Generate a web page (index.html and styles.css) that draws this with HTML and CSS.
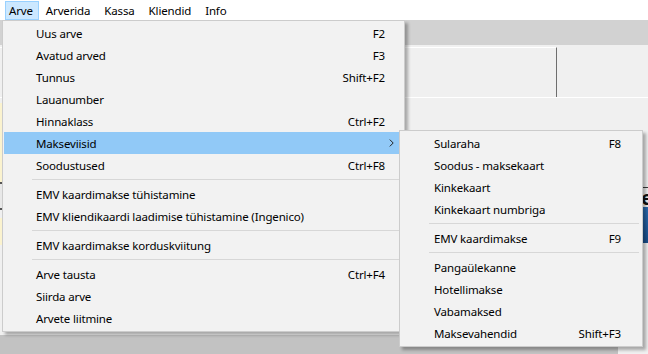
FILE: index.html
```html
<!DOCTYPE html>
<html lang="et">
<head>
    <meta charset="UTF-8">
    <title>Kassa</title>
    <link rel="stylesheet" href="styles.css">
</head>
<body>

<div class="app">
    <div class="menubar">
        <span class="menubar-item active">Arve</span>
        <span class="menubar-item">Arverida</span>
        <span class="menubar-item">Kassa</span>
        <span class="menubar-item">Kliendid</span>
        <span class="menubar-item">Info</span>
    </div>

    <div class="workspace">
        <div class="toolbar"></div>
        <div class="panel-row">
            <div class="panel-box"></div>
        </div>
        <div class="content">
            <div class="edge"></div>
            <div class="content-main">
                <div class="total-card">
                    <div class="total-label">Tasumisele</div>
                    <div class="total-bar"></div>
                </div>
            </div>
        </div>
        <div class="statusbar">
            <div class="status-left"></div>
            <div class="status-right"></div>
        </div>
    </div>

    <div class="menu main-menu">
        <div class="menu-item"><span class="label">Uus arve</span><span class="key">F2</span></div>
        <div class="menu-item"><span class="label">Avatud arved</span><span class="key">F3</span></div>
        <div class="menu-item"><span class="label">Tunnus</span><span class="key">Shift+F2</span></div>
        <div class="menu-item"><span class="label">Lauanumber</span></div>
        <div class="menu-item"><span class="label">Hinnaklass</span><span class="key">Ctrl+F2</span></div>
        <div class="menu-item selected">
            <span class="label">Makseviisid</span>
            <svg class="arrow" width="5" height="8" viewBox="0 0 5 8"><path d="M0.8 0.6 L4.2 4 L0.8 7.4" fill="none" stroke="#222" stroke-width="1"/></svg>
        </div>
        <div class="menu-item"><span class="label">Soodustused</span><span class="key">Ctrl+F8</span></div>
        <div class="menu-sep"></div>
        <div class="menu-item"><span class="label">EMV kaardimakse tühistamine</span></div>
        <div class="menu-item"><span class="label">EMV kliendikaardi laadimise tühistamine (Ingenico)</span></div>
        <div class="menu-sep"></div>
        <div class="menu-item"><span class="label">EMV kaardimakse korduskviitung</span></div>
        <div class="menu-sep"></div>
        <div class="menu-item"><span class="label">Arve tausta</span><span class="key">Ctrl+F4</span></div>
        <div class="menu-item"><span class="label">Siirda arve</span></div>
        <div class="menu-item"><span class="label">Arvete liitmine</span></div>
    </div>

    <div class="menu sub-menu">
        <div class="menu-item"><span class="label">Sularaha</span><span class="key">F8</span></div>
        <div class="menu-item"><span class="label">Soodus - maksekaart</span></div>
        <div class="menu-item"><span class="label">Kinkekaart</span></div>
        <div class="menu-item"><span class="label">Kinkekaart numbriga</span></div>
        <div class="menu-sep"></div>
        <div class="menu-item"><span class="label">EMV kaardimakse</span><span class="key">F9</span></div>
        <div class="menu-sep"></div>
        <div class="menu-item"><span class="label">Pangaülekanne</span></div>
        <div class="menu-item"><span class="label">Hotellimakse</span></div>
        <div class="menu-item"><span class="label">Vabamaksed</span></div>
        <div class="menu-item"><span class="label">Maksevahendid</span><span class="key">Shift+F3</span></div>
    </div>
</div>

</body>
</html>
```

FILE: styles.css
```css
* {
    box-sizing: border-box;
}

body {
    margin: 0;
    font-family: "Noto Sans", "Open Sans", sans-serif;
    font-size: 11.5px;
    letter-spacing: -0.15px;
    color: #000;
    background-color: #f0f0f0;
}

.app {
    position: relative;
    width: 648px;
    height: 354px;
    overflow: hidden;
    display: flex;
    flex-direction: column;
}

/* top menu bar */
.menubar {
    height: 20px;
    display: flex;
    padding: 1px 0 0 5px;
    background-color: #fff;
}

.menubar-item {
    height: 19px;
    line-height: 17px;
    padding: 0 6px;
    border: 1px solid transparent;
}

.menubar-item:first-child {
    padding: 0 5px 0 3px;
}

.menubar-item.active {
    background-color: #cce8ff;
    border-color: #99d1ff;
}

/* window behind the menus */
.workspace {
    flex: 1;
    display: flex;
    flex-direction: column;
    background-color: #f0f0f0;
}

.toolbar {
    height: 25px;
    background-color: #d2d2d2;
}

.panel-row {
    height: 53px;
    padding-top: 2px;
    border-bottom: 1px solid #fff;
}

.panel-box {
    width: 557px;
    height: 100%;
    border-top: 1px solid #fff;
    border-right: 1px solid #6e6e6e;
}

.content {
    flex: 1;
    display: flex;
}

.edge {
    width: 2px;
    background: linear-gradient(#f0f0f0 0, #f0f0f0 5px, #fbf3cf 5px, #fbf3cf 84px, #555 84px, #555 86px, #e8e8e8 86px, #e8e8e8 110px, #555 110px, #555 112px, #f0f0f0 112px, #f0f0f0 120px, #fbf3cf 120px, #fbf3cf 147px, #f0f0f0 147px);
}

.content-main {
    flex: 1;
    display: flex;
    justify-content: flex-end;
}

.total-card {
    width: 150px;
    margin-top: 89px;
    margin-right: -5px;
    align-self: flex-start;
    border-top: 1px solid #3a3a3a;
}

.total-label {
    height: 19px;
    line-height: 19px;
    text-align: right;
    font-size: 20px;
    font-weight: bold;
    letter-spacing: 0;
    color: #111;
}

.total-bar {
    height: 36px;
    background: linear-gradient(#2a6bb0, #1a4f8c);
}

.statusbar {
    height: 19px;
    display: flex;
}

.status-left {
    flex: 1;
    background-color: #c2c2c2;
}

.status-right {
    width: 30px;
    background-color: #f0f0f0;
}

/* drop-down menus */
.menu {
    position: absolute;
    background-color: #f2f2f2;
    border: 1px solid #cccccc;
    box-shadow: 3px 3px 3px rgba(0, 0, 0, 0.3);
    padding: 1px 3px 2px 1px;
}

.main-menu {
    left: 2px;
    top: 20px;
    width: 403px;
}

.sub-menu {
    left: 399px;
    top: 130px;
    width: 244px;
}

.menu-item {
    height: 22px;
    display: flex;
    align-items: center;
    padding: 0 16px 0 32px;
    white-space: nowrap;
}

.sub-menu .menu-item {
    padding: 0 18px 0 33px;
}

.menu-item .label {
    flex: 1;
}

.menu-item.selected {
    background-color: #91c9f7;
}

.arrow {
    margin-right: -9px;
}

.menu-sep {
    height: 7px;
    margin-left: 28px;
    padding-top: 3px;
}

.menu-sep::after {
    content: "";
    display: block;
    height: 1px;
    background-color: #d7d7d7;
}
```
